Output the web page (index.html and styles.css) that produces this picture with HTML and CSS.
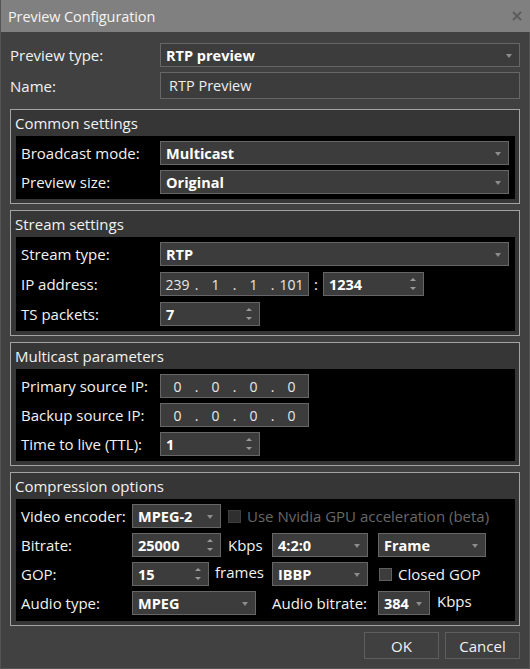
FILE: index.html
```html
<!DOCTYPE html>
<html lang="en">
<head>
    <meta charset="UTF-8">
    <title>Preview Configuration</title>
    <link rel="stylesheet" href="styles.css">
</head>
<body>
<div class="window">
    <div class="titlebar">
        <span class="title">Preview Configuration</span>
        <svg class="close" width="10" height="10" viewBox="0 0 10 10"><path d="M1 1L9 9M9 1L1 9"/></svg>
    </div>

    <div class="content">
        <div class="row top">
            <span class="label">Preview type:</span>
            <div class="combo wide"><b>RTP preview</b><i class="arrow"></i></div>
        </div>
        <div class="row top name">
            <span class="label">Name:</span>
            <div class="textbox wide">RTP Preview</div>
        </div>

        <section class="group">
            <div class="group-title">Common settings</div>
            <div class="group-body">
                <div class="row">
                    <span class="label">Broadcast mode:</span>
                    <div class="combo full"><b>Multicast</b><i class="arrow"></i></div>
                </div>
                <div class="row">
                    <span class="label">Preview size:</span>
                    <div class="combo full"><b>Original</b><i class="arrow"></i></div>
                </div>
            </div>
        </section>

        <section class="group">
            <div class="group-title">Stream settings</div>
            <div class="group-body spaced">
                <div class="row">
                    <span class="label">Stream type:</span>
                    <div class="combo full"><b>RTP</b><i class="arrow"></i></div>
                </div>
                <div class="row">
                    <span class="label">IP address:</span>
                    <div class="ipbox"><span>239</span><em>.</em><span>1</span><em>.</em><span>1</span><em>.</em><span>101</span></div>
                    <span class="colon">:</span>
                    <div class="spin port"><b>1234</b><i class="updown"></i></div>
                </div>
                <div class="row">
                    <span class="label">TS packets:</span>
                    <div class="spin small"><b>7</b><i class="updown"></i></div>
                </div>
            </div>
        </section>

        <section class="group">
            <div class="group-title">Multicast parameters</div>
            <div class="group-body">
                <div class="row">
                    <span class="label">Primary source IP:</span>
                    <div class="ipbox"><span>0</span><em>.</em><span>0</span><em>.</em><span>0</span><em>.</em><span>0</span></div>
                </div>
                <div class="row">
                    <span class="label">Backup source IP:</span>
                    <div class="ipbox"><span>0</span><em>.</em><span>0</span><em>.</em><span>0</span><em>.</em><span>0</span></div>
                </div>
                <div class="row">
                    <span class="label">Time to live (TTL):</span>
                    <div class="spin small"><b>1</b><i class="updown"></i></div>
                </div>
            </div>
        </section>

        <section class="group">
            <div class="group-title">Compression options</div>
            <div class="group-body compression">
                <span class="label">Video encoder:</span>
                <div class="cell span3">
                    <div class="combo enc"><b>MPEG-2</b><i class="arrow"></i></div>
                    <span class="check disabled"></span>
                    <span class="muted">Use Nvidia GPU acceleration (beta)</span>
                </div>

                <span class="label">Bitrate:</span>
                <div class="cell">
                    <div class="spin enc"><b>25000</b><i class="updown"></i></div>
                    <span class="unit">Kbps</span>
                </div>
                <div class="combo chroma"><b>4:2:0</b><i class="arrow"></i></div>
                <div class="cell"><div class="combo frame"><b>Frame</b><i class="arrow"></i></div></div>

                <span class="label">GOP:</span>
                <div class="cell">
                    <div class="spin gop"><b>15</b><i class="updown"></i></div>
                    <span class="unit raised">frames</span>
                </div>
                <div class="combo chroma"><b>IBBP</b><i class="arrow"></i></div>
                <div class="cell">
                    <span class="check"></span>
                    <span class="plain">Closed GOP</span>
                </div>

                <span class="label">Audio type:</span>
                <div class="cell"><div class="combo audio"><b>MPEG</b><i class="arrow"></i></div></div>
                <span class="label">Audio bitrate:</span>
                <div class="cell">
                    <div class="combo abr"><b>384</b><i class="arrow"></i></div>
                    <span class="unit raised">Kbps</span>
                </div>
            </div>
        </section>

        <div class="buttons">
            <button>OK</button>
            <button>Cancel</button>
        </div>
    </div>
</div>
</body>
</html>
```

FILE: styles.css
```css
/* Dark dialog, fixed to the window size */
html, body {
    margin: 0;
    height: 100%;
    background-color: #414141;
}

.window {
    box-sizing: border-box;
    width: 530px;
    height: 669px;
    border: 1px solid #545454;
    border-top: none;
    font-family: "Open Sans", "Noto Sans", sans-serif;
    font-size: 15px;
    color: #f2f2f2;
}

.titlebar {
    height: 32px;
    margin-right: -1px;
    background-color: #808080;
    display: flex;
    align-items: center;
    justify-content: space-between;
    padding: 0 8px 0 7px;
}

.title {
    font-size: 14.5px;
    color: #f4f4f4;
    letter-spacing: -0.1px;
}

.close path {
    stroke: #5b5b5b;
    stroke-width: 1.8;
}

.content {
    padding: 11px 9px 0 9px;
}

.row {
    display: flex;
    align-items: center;
    height: 24px;
}

.row.top .label {
    width: 150px;
}

.row.name {
    margin-top: 5px;
    height: 27px;
}

.label {
    white-space: nowrap;
}

/* Combo boxes, text boxes and spin boxes share one look */
.combo, .textbox, .spin, .ipbox {
    box-sizing: border-box;
    height: 24px;
    background-color: #3c3c3c;
    border: 1px solid #666;
    display: flex;
    align-items: center;
    padding: 0 5px;
    color: #fff;
    font-size: 14px;
}

.combo b, .spin b {
    font-weight: 700;
    font-size: 14.5px;
    flex: 1;
}

.wide {
    width: 360px;
}

.textbox {
    height: 27px;
    padding-left: 8px;
    color: #eee;
    font-size: 14.5px;
}

.arrow {
    width: 0;
    height: 0;
    border-left: 3px solid transparent;
    border-right: 3px solid transparent;
    border-top: 4px solid #8d8d8d;
    margin-right: 2px;
    margin-top: 1px;
}

/* Up/down arrows of a spin box */
.updown {
    width: 6px;
    height: 12px;
    margin-right: 2px;
    position: relative;
}

.updown::before, .updown::after {
    content: "";
    position: absolute;
    left: 0;
    width: 0;
    height: 0;
    border-left: 3px solid transparent;
    border-right: 3px solid transparent;
}

.updown::before {
    top: 0;
    border-bottom: 3px solid #9a9a9a;
}

.updown::after {
    bottom: 0;
    border-top: 3px solid #9a9a9a;
}

/* Group boxes */
.group {
    margin-top: 10px;
    border: 1px solid #a3a3a3;
    background-color: #363636;
    padding: 0 4px 4px 5px;
}

.group + .group {
    margin-top: 6px;
}

.group-title {
    height: 26px;
    line-height: 27px;
    margin-left: -1px;
}

.group-body {
    background-color: #000;
    padding: 5px 5px;
    display: flex;
    flex-direction: column;
    gap: 5px;
}

.group-body .row .label {
    width: 139px;
}

.group-body.spaced {
    gap: 6px;
}

.full {
    width: 349px;
}

/* Four-part address field */
.ipbox {
    width: 149px;
    color: #e8e8e8;
    padding: 0 0 0 1px;
    font-weight: 400;
}

.ipbox span {
    width: 31px;
    text-align: center;
}

.ipbox em {
    font-style: normal;
    width: 7px;
    text-align: center;
}

.colon {
    width: 14px;
    text-align: center;
}

.port {
    width: 101px;
}

.small {
    width: 100px;
}

/* Compression options grid */
.compression {
    display: grid;
    grid-template-columns: 111px 140px 106px 1fr;
    grid-auto-rows: 24px;
    gap: 5px 0;
    align-items: center;
    padding-bottom: 6px;
}

.cell {
    display: flex;
    align-items: center;
    height: 24px;
}

.span3 {
    grid-column: 2 / span 3;
}

.enc {
    width: 89px;
}

.gop {
    width: 77px;
}

.chroma {
    width: 96px;
}

.frame {
    width: 108px;
}

.audio {
    width: 124px;
}

.abr {
    width: 52px;
}

.unit {
    margin-left: 7px;
}

.gop + .unit {
    margin-left: 6px;
}

.raised {
    position: relative;
    top: -2px;
}

.check {
    box-sizing: border-box;
    width: 13px;
    height: 13px;
    border: 1px solid #5e5e5e;
    background-color: #3c3c3c;
    margin: 0 6px 0 7px;
}

.check.disabled {
    border-color: #3e3e3e;
    background-color: #2f2f2f;
}

.cell .check:first-child {
    margin-left: 1px;
}

.muted {
    color: #686868;
    white-space: nowrap;
}

.buttons {
    display: flex;
    justify-content: flex-end;
    gap: 6px;
    margin-top: 6px;
}

button {
    width: 75px;
    height: 27px;
    background-color: #404040;
    border: 1px solid #5e5e5e;
    color: #f2f2f2;
    font-family: inherit;
    font-size: 15px;
    padding: 0;
}
```
